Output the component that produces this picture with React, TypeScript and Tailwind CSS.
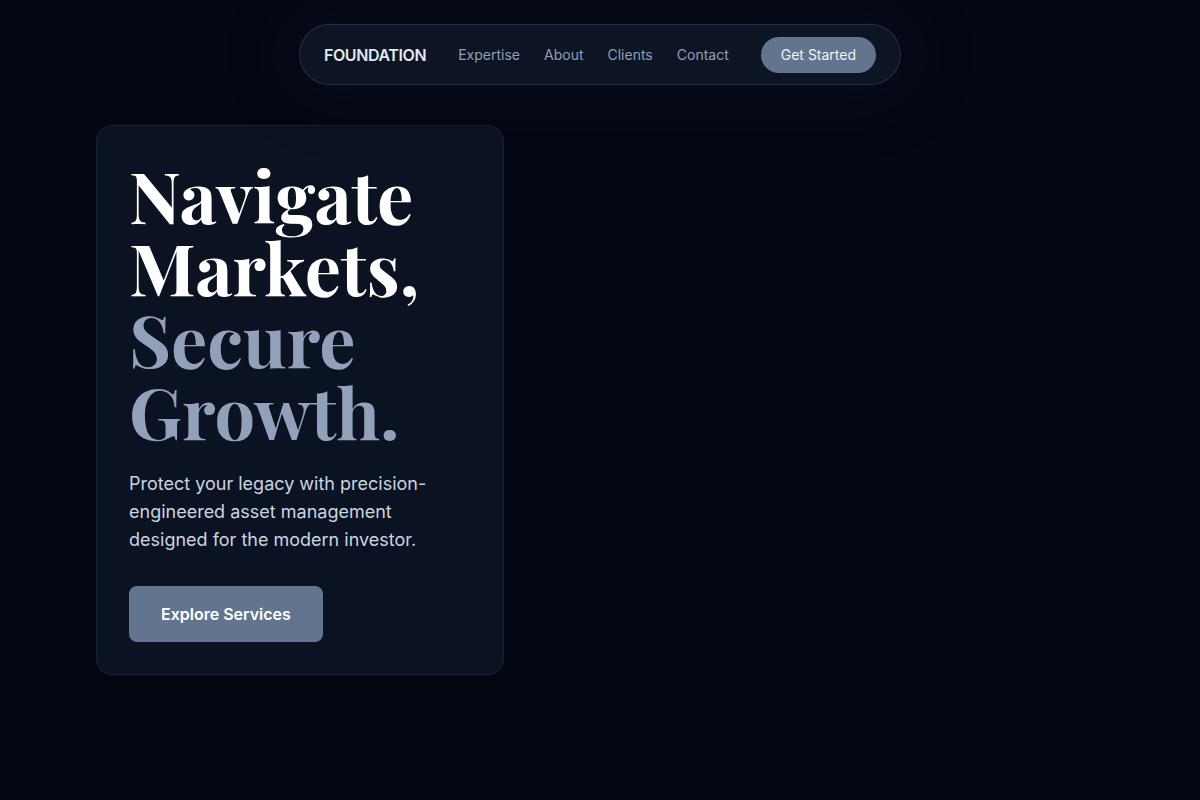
import React from 'react';

const navLinks = ['Expertise', 'About', 'Clients', 'Contact'];

const App: React.FC = () => {
  return (
    <div
      className="min-h-screen w-full bg-[#030712] text-slate-100"
      style={{ fontFamily: 'Inter, "Noto Sans", sans-serif' }}
    >
      <header className="flex justify-center pt-6">
        <nav className="flex h-[61px] items-center rounded-full border border-slate-700/60 bg-[#0d1424] px-6 shadow-[0_0_60px_10px_rgba(15,23,42,0.45)]">
          <span className="text-base font-semibold tracking-tight text-slate-200">FOUNDATION</span>
          <ul className="ml-8 flex items-center gap-6">
            {navLinks.map(link => (
              <li key={link} className="text-sm text-slate-400">
                {link}
              </li>
            ))}
          </ul>
          <button className="ml-8 h-9 rounded-full bg-slate-500 px-5 text-sm text-slate-100">
            Get Started
          </button>
        </nav>
      </header>

      <main className="pl-24 pt-[40px]">
        <section className="w-[408px] rounded-2xl border border-slate-800/70 bg-[#0b1221] p-8">
          <h1
            className="text-[72px] font-bold leading-[72px]"
            style={{ fontFamily: '"Playfair Display", "Liberation Serif", serif' }}
          >
            <span className="block text-white">Navigate</span>
            <span className="block text-white">Markets,</span>
            <span className="block text-slate-400">Secure</span>
            <span className="block text-slate-400">Growth.</span>
          </h1>
          <p className="mt-6 max-w-[310px] text-lg leading-7 text-slate-300">
            Protect your legacy with precision-engineered asset management designed for the modern investor.
          </p>
          <button className="mt-8 h-14 rounded-lg bg-slate-500 px-8 text-base font-semibold text-white">
            Explore Services
          </button>
        </section>
      </main>
    </div>
  );
};

export default App;
